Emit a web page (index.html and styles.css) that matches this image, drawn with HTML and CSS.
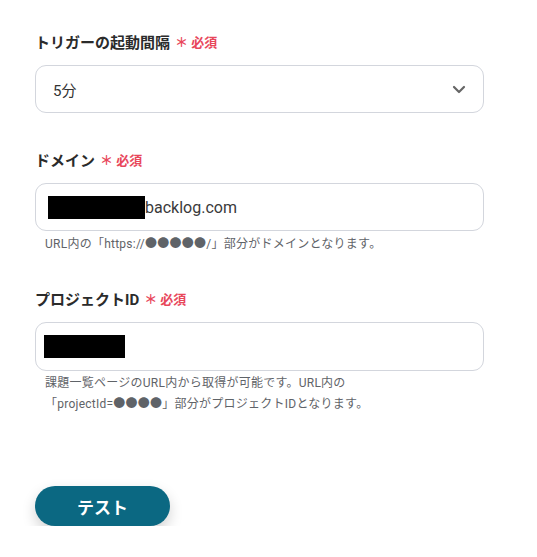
FILE: index.html
```html
<!DOCTYPE html>
<html lang="ja">
<head>
<meta charset="utf-8">
<link rel="stylesheet" href="styles.css">
</head>
<body>
<div class="form">
  <div class="field f1">
    <div class="label">トリガーの起動間隔<span class="req">＊ 必須</span></div>
    <div class="box select">
      <span class="val">5分</span>
      <svg class="chev" width="14" height="9" viewBox="0 0 14 9"><path d="M2 2 L7 7 L12 2" fill="none" stroke="#666" stroke-width="2.2" stroke-linecap="round" stroke-linejoin="round"/></svg>
    </div>
  </div>
  <div class="field f2">
    <div class="label">ドメイン<span class="req">＊ 必須</span></div>
    <div class="box domain">
      <span class="mask m1"></span><span class="val">backlog.com</span>
    </div>
    <p class="help">URL内の「https://●●●●●/」部分がドメインとなります。</p>
  </div>
  <div class="field f3">
    <div class="label">プロジェクトID<span class="req">＊ 必須</span></div>
    <div class="box project">
      <span class="mask m2"></span>
    </div>
    <p class="help">課題一覧ページのURL内から取得が可能です。URL内の<br>「projectId=●●●●」部分がプロジェクトIDとなります。</p>
  </div>
  <button class="btn">テスト</button>
</div>
</body>
</html>
```

FILE: styles.css
```css
html, body {
  margin: 0;
  padding: 0;
  background: #fff;
}
body {
  font-family: Roboto, "Noto Sans CJK JP", sans-serif;
  color: #333;
}
.form {
  padding: 33px 0 0 35px;
  width: 449px;
  display: flex;
  flex-direction: column;
}
.label {
  font-size: 15px;
  font-weight: 700;
  line-height: 20px;
  height: 20px;
  color: #2b2b2b;
  display: flex;
  align-items: center;
}
.req {
  color: #e8475b;
  font-size: 13px;
  font-weight: 700;
  margin-left: 5px;
}
.box {
  box-sizing: border-box;
  height: 48px;
  margin-top: 12px;
  border: 1px solid #d3d6dd;
  border-radius: 11px;
  display: flex;
  align-items: center;
  background: #fff;
}
.select {
  padding: 0 17px 0 17px;
  justify-content: space-between;
}
.select .val {
  font-size: 15px;
  color: #333;
}
.chev {
  display: block;
}
.f2 {
  margin-top: 38px;
}
.domain {
  padding-left: 12px;
}
.domain .val {
  font-size: 16px;
  color: #3a3a3a;
}
.mask {
  display: block;
  background: #000;
  height: 23px;
}
.m1 { width: 97px; }
.project {
  padding-left: 8px;
  height: 49px;
}
.m2 { width: 81px; }
.help {
  margin: 3px 0 0 10px;
  font-size: 12px;
  line-height: 21px;
  letter-spacing: 0.25px;
  color: #5f6368;
}
.f3 {
  margin-top: 35px;
}
.f3 .help {
  margin-top: 2px;
}
.btn {
  margin-top: 71px;
  width: 135px;
  height: 40px;
  border: none;
  border-radius: 20px;
  background: #0b6882;
  color: #fff;
  font-family: Roboto, "Noto Sans CJK JP", sans-serif;
  font-size: 17px;
  font-weight: 700;
  box-shadow: 0 6px 14px rgba(0, 0, 0, 0.18);
  padding: 0;
}
```
